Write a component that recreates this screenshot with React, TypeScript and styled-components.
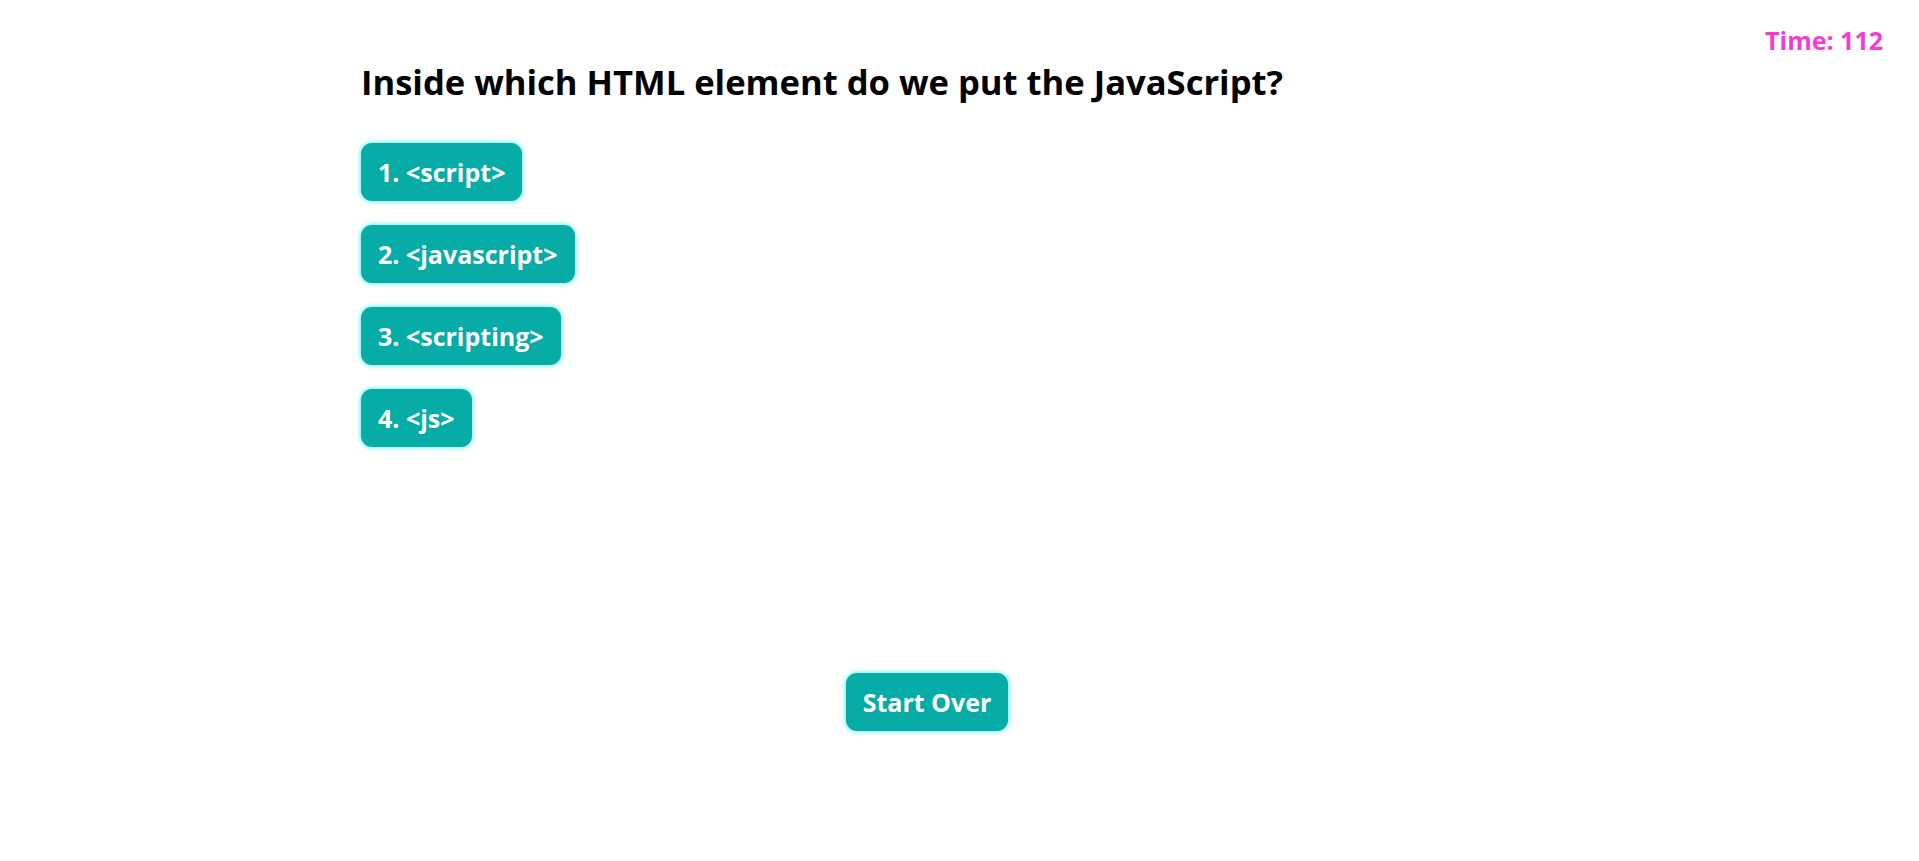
import React from 'react';
import styled, { createGlobalStyle } from 'styled-components';

const GlobalStyle = createGlobalStyle`
  html, body {
    margin: 0;
    padding: 0;
    background: #fff;
    font-family: "Open Sans", "Noto Sans", sans-serif;
  }
`;

const Page = styled.div`
  position: relative;
  min-height: 861px;
`;

const Timer = styled.div`
  position: absolute;
  top: 23px;
  right: 36px;
  color: #f53cd2;
  font-size: 25px;
  font-weight: 700;
`;

const Quiz = styled.main`
  width: 1140px;
  padding: 58px 0 0 361px;
  display: flex;
  flex-direction: column;
`;

const Question = styled.h1`
  margin: 0;
  font-size: 34.6px;
  font-weight: 700;
  color: #000;
  line-height: 48px;
`;

const Choices = styled.ol`
  list-style: none;
  margin: 36.5px 0 0;
  padding: 0;
  display: flex;
  flex-direction: column;
  align-items: flex-start;
  gap: 24px;
`;

const Button = styled.button`
  height: 58px;
  padding: 0 17px;
  border: none;
  border-radius: 11px;
  background: #07aca6;
  color: #fff;
  font-family: "Open Sans", "Noto Sans", sans-serif;
  font-size: 25px;
  font-weight: 700;
  box-shadow: 0 0 4px 1px #6ff3f0;
  cursor: pointer;
`;

const Footer = styled.div`
  display: flex;
  justify-content: center;
  margin-top: 226px;
  padding-right: 8px;
`;

const choices = ['<script>', '<javascript>', '<scripting>', '<js>'];

export default function App() {
  return (
    <Page>
      <GlobalStyle />
      <Timer>Time: 112</Timer>
      <Quiz>
        <Question>Inside which HTML element do we put the JavaScript?</Question>
        <Choices>
          {choices.map((c, i) => (
            <li key={c}>
              <Button>
                {i + 1}. {c}
              </Button>
            </li>
          ))}
        </Choices>
        <Footer>
          <Button>Start Over</Button>
        </Footer>
      </Quiz>
    </Page>
  );
}
